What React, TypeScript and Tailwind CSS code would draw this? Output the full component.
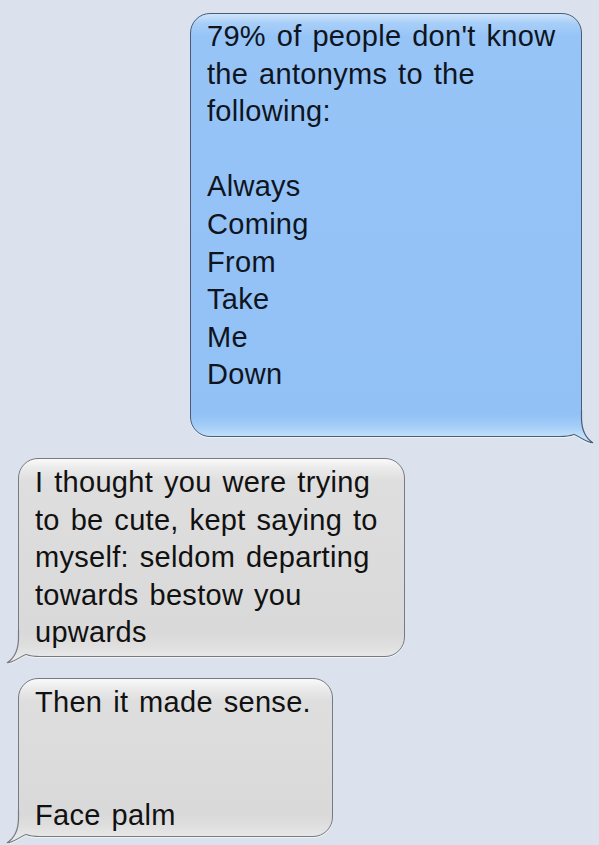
import clsx from "clsx"

type Props = {
  lines: string[]
  mine?: boolean
  className?: string
}

const Tail = ({ mine }: { mine?: boolean }) => {
  const id = mine ? "tail-blue" : "tail-gray"
  return (
    <svg
      width="44"
      height="36"
      viewBox="0 0 44 36"
      className={clsx(
        "absolute bottom-[-10px] pointer-events-none",
        mine ? "right-[-15px]" : "left-[-15px] -scale-x-100",
      )}
    >
      <defs>
        <linearGradient id={id} x1="0" y1="0" x2="0" y2="34" gradientUnits="userSpaceOnUse">
          {mine ? (
            <>
              <stop offset="0" stopColor="#92c1f6" />
              <stop offset="0.12" stopColor="#92c1f6" />
              <stop offset="0.47" stopColor="#a4cdf7" />
              <stop offset="0.76" stopColor="#bfdff9" />
              <stop offset="1" stopColor="#d0e8fb" />
            </>
          ) : (
            <>
              <stop offset="0" stopColor="#d9d9d9" />
              <stop offset="0.12" stopColor="#d9d9d9" />
              <stop offset="0.5" stopColor="#dfdfdf" />
              <stop offset="0.76" stopColor="#e7e7e7" />
              <stop offset="1" stopColor="#eeeeee" />
            </>
          )}
        </linearGradient>
      </defs>
      <rect x="0" y="18" width="44" height="18" fill="#dbe2ed" />
      <path
        d="M0 0 H30 V8 C30 20 34 28 41 33 C35 32.5 28 27 22 24.5 C17 26.5 14 27 8 27 H0 Z"
        fill={`url(#${id})`}
      />
      <path
        d="M29.5 0 V8 C29.5 20 33.5 28 41 33 C35 32.5 28 27 22 24.5 C17 26.5 14 26.5 8 26.5 H0"
        fill="none"
        stroke={mine ? "#4b5d75" : "#777b80"}
        strokeWidth="1.2"
      />
      <path
        d="M41 34 C35 33.5 28 28 22 25.5 C17 27.5 14 27.5 8 27.5 H0"
        fill="none"
        stroke="#ffffff"
        strokeOpacity="0.6"
        strokeWidth="1"
      />
    </svg>
  )
}

const Bubble = ({ lines, mine, className }: Props) => {
  return (
    <div
      className={clsx(
        "relative border px-4 text-[29px] leading-[37.6px] tracking-[0.3px] [word-spacing:2.5px] shadow-[0_1px_0_rgba(255,255,255,0.6)]",
        mine
          ? "rounded-[20px] rounded-br-none border-[#4b5d75] text-[#0f1520] bg-[linear-gradient(180deg,#cfe4fb_0px,#a8cff8_9px,#97c4f7_22px,#92c1f6_calc(100%_-_22px),#a4cdf7_calc(100%_-_10px),#bfdff9_100%)]"
          : "rounded-[20px] rounded-bl-none border-[#777b80] text-[#111111] bg-[linear-gradient(180deg,#fafafa_0px,#ebebeb_9px,#dedede_22px,#d9d9d9_calc(100%_-_22px),#dfdfdf_calc(100%_-_10px),#e7e7e7_100%)]",
        className,
      )}
    >
      <Tail mine={mine} />
      <div className="relative">
        {lines.map((line, i) => (
          <div key={i} className="whitespace-pre">
            {line || "\u00a0"}
          </div>
        ))}
      </div>
    </div>
  )
}

const App = () => {
  return (
    <div
      className="w-[599px] h-[845px] overflow-hidden bg-[#dbe2ed] flex flex-col gap-[21px] pt-[13px]"
      style={{ fontFamily: '"Liberation Sans", Arial, sans-serif' }}
    >
      <Bubble
        mine
        className="self-end mr-[17px] w-[392px] pt-[4px] pb-[42px]"
        lines={[
          "79% of people don't know",
          "the antonyms to the",
          "following:",
          "",
          "Always",
          "Coming",
          "From",
          "Take",
          "Me",
          "Down",
        ]}
      />
      <Bubble
        className="ml-[18px] w-[387px] pt-[5px] pb-[4px]"
        lines={[
          "I thought you were trying",
          "to be cute, kept saying to",
          "myself: seldom departing",
          "towards bestow you",
          "upwards",
        ]}
      />
      <Bubble
        className="ml-[18px] w-[315px] pt-[5px] pb-[2px]"
        lines={["Then it made sense.", "", "", "Face palm"]}
      />
    </div>
  )
}

export default App
